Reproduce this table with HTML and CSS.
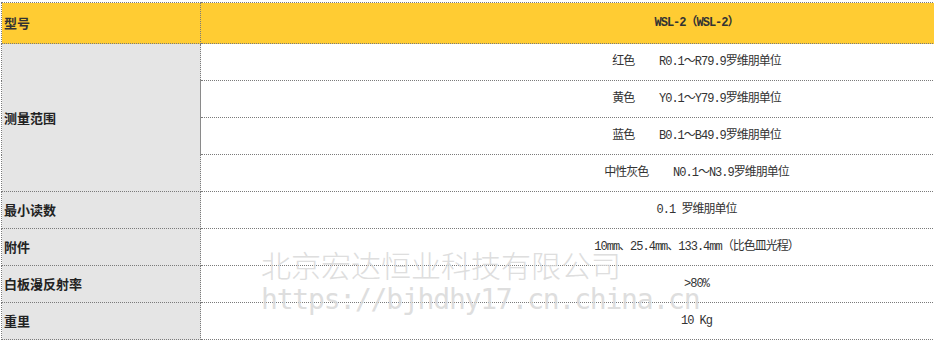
FILE: index.html
```html
<!DOCTYPE html>
<html lang="zh">
<head>
<meta charset="utf-8">
<title>WSL-2</title>
<link rel="stylesheet" href="styles.css">
</head>
<body>
<div class="page">
  <table class="spec">
    <tr class="head">
      <td class="label">型号</td>
      <td class="value strong">WSL-2（WSL-2）</td>
    </tr>
    <tr>
      <td class="label" rowspan="4">测量范围</td>
      <td class="value">红色&nbsp;&nbsp;&nbsp;&nbsp;R0.1～R79.9罗维朋单位</td>
    </tr>
    <tr>
      <td class="value solid">黄色&nbsp;&nbsp;&nbsp;&nbsp;Y0.1～Y79.9罗维朋单位</td>
    </tr>
    <tr>
      <td class="value solid">蓝色&nbsp;&nbsp;&nbsp;&nbsp;B0.1～B49.9罗维朋单位</td>
    </tr>
    <tr>
      <td class="value">中性灰色&nbsp;&nbsp;&nbsp;&nbsp;N0.1～N3.9罗维朋单位</td>
    </tr>
    <tr>
      <td class="label">最小读数</td>
      <td class="value">0.1 罗维朋单位</td>
    </tr>
    <tr>
      <td class="label">附件</td>
      <td class="value">10mm、25.4mm、133.4mm（比色皿光程）</td>
    </tr>
    <tr>
      <td class="label">白板漫反射率</td>
      <td class="value">&gt;80%</td>
    </tr>
    <tr>
      <td class="label">重里</td>
      <td class="value">10 Kg</td>
    </tr>
  </table>
  <div class="watermark">
    <div class="wm-name">北京宏达恒业科技有限公司</div>
    <div class="wm-url">https://bjhdhy17.cn.china.cn</div>
  </div>
</div>
</body>
</html>
```
FILE: styles.css
```css
html, body {
  margin: 0;
  padding: 0;
  overflow: hidden;
  background: #fff;
}

.page {
  position: relative;
  padding: 2px 0 0 1px;
  font-family: "Liberation Mono", "Noto Sans CJK SC", monospace;
  font-size: 12px;
  color: #333;
}

.spec {
  border-collapse: collapse;
  width: 1192px;
  table-layout: fixed;
}

.spec td {
  border: 1px dotted #7a7a7a;
  padding: 0;
  height: 36px;
  line-height: 16px;
}

.spec .head td {
  background: #ffcc33;
  height: 40px;
}

.label {
  width: 196px;
  padding-left: 2px !important;
  background: #e5e5e5;
  font-family: "Noto Sans CJK SC", sans-serif;
  font-weight: bold;
  font-size: 13px;
  color: #222;
  text-align: left;
  vertical-align: middle;
}

.head .label {
  color: #333;
  font-weight: bold;
}

.value {
  text-align: center;
  vertical-align: middle;
  letter-spacing: -1px;
  font-family: "Liberation Mono", "Noto Sans CJK SC", monospace;
}

.strong {
  font-weight: bold;
}

.spec td.solid {
  border-left: 1px solid #8a8a8a;
}

.watermark {
  position: absolute;
  left: 261px;
  top: 246px;
  color: #d6d6d6;
  pointer-events: none;
  white-space: nowrap;
}

.wm-name {
  font-family: "Noto Sans CJK SC", sans-serif;
  font-size: 30px;
  line-height: 36px;
  font-weight: 300;
  opacity: 0.8;
}

.wm-url {
  font-family: "DejaVu Sans Mono", "Liberation Mono", monospace;
  font-size: 28px;
  line-height: 36px;
  letter-spacing: -1.2px;
  opacity: 0.8;
}
```
